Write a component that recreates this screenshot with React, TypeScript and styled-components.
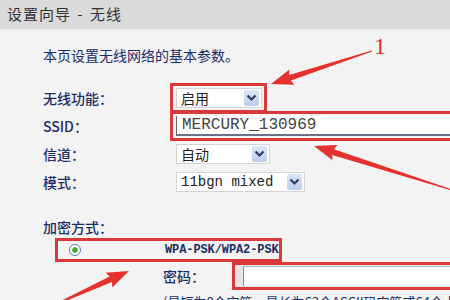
import React from 'react';
import styled, { createGlobalStyle } from 'styled-components';

const GlobalStyle = createGlobalStyle`
  html, body {
    margin: 0;
    padding: 0;
    background: #f3f3f3;
  }
`;

const CJK = `"Noto Sans CJK SC", "Noto Sans", sans-serif`;
const MONO = `"Liberation Mono", "DejaVu Sans Mono", monospace`;
const RED = '#d8393a';

type Arrow = { from: [number, number]; to: [number, number] };

// tapered annotation arrow, thin at the tail, wide head at the tip
function arrowPoints({ from, to }: Arrow) {
  const [x1, y1] = from;
  const [x2, y2] = to;
  const dx = x2 - x1;
  const dy = y2 - y1;
  const len = Math.hypot(dx, dy);
  const ux = dx / len;
  const uy = dy / len;
  const nx = -uy;
  const ny = ux;
  const headLen = 20;
  const headW = 8;
  const shaftW = 3;
  const bx = x2 - ux * headLen;
  const by = y2 - uy * headLen;
  const pts = [
    [x1 + nx * 0.6, y1 + ny * 0.6],
    [bx + nx * shaftW, by + ny * shaftW],
    [bx + nx * headW - ux * 2, by + ny * headW - uy * 2],
    [x2, y2],
    [bx - nx * headW - ux * 2, by - ny * headW - uy * 2],
    [bx - nx * shaftW, by - ny * shaftW],
    [x1 - nx * 0.6, y1 - ny * 0.6],
  ];
  return pts.map(p => `${p[0].toFixed(1)},${p[1].toFixed(1)}`).join(' ');
}

const arrows: Arrow[] = [
  { from: [372, 51], to: [271, 84] },
  { from: [452, 190], to: [314, 146] },
  { from: [52, 306], to: [129, 271] },
];

const App: React.FC = () => {
  return (
    <Page>
      <GlobalStyle />
      <Header>设置向导 - 无线</Header>
      <Body>
        <Intro>本页设置无线网络的基本参数。</Intro>
        <FormGrid>
          <Label>无线功能：</Label>
          <Highlight>
            <Select $width={86}>
              <SelectText>启用</SelectText>
              <DropButton />
            </Select>
          </Highlight>

          <Label>SSID：</Label>
          <Highlight $stretch>
            <TextInput>MERCURY_130969</TextInput>
          </Highlight>

          <Label>信道：</Label>
          <Plain>
            <Select $width={94}>
              <SelectText>自动</SelectText>
              <DropButton />
            </Select>
          </Plain>

          <Label>模式：</Label>
          <Plain>
            <Select $width={129}>
              <SelectText $mono>11bgn mixed</SelectText>
              <DropButton />
            </Select>
          </Plain>
        </FormGrid>

        <SectionLabel>加密方式：</SectionLabel>
        <RadioBox>
          <Radio />
          <RadioText>WPA-PSK/WPA2-PSK</RadioText>
        </RadioBox>
        <PasswordRow>
          <Label>密码：</Label>
          <PasswordBox>
            <PasswordInput />
          </PasswordBox>
        </PasswordRow>
        <Hint>(最短为8个字符，最长为63个ASCII码字符或64个十六进制字符)</Hint>
      </Body>

      <Annotations width={450} height={300} viewBox="0 0 450 300">
        {arrows.map((a, i) => (
          <polygon key={i} points={arrowPoints(a)} fill="#e5322d" />
        ))}
        <text x="374" y="54" fill="#e0302c" fontFamily="Liberation Serif, serif" fontSize="24">1</text>
      </Annotations>
    </Page>
  );
};

const DropButton: React.FC = () => (
  <Chevron>
    <svg width="11" height="8" viewBox="0 0 11 8">
      <polyline points="1.5,1.5 5.5,5.5 9.5,1.5" fill="none" stroke="#2b3d6e" strokeWidth="2.2" />
    </svg>
  </Chevron>
);

const Page = styled.div`
  position: relative;
  width: 450px;
  height: 300px;
  overflow: hidden;
  background: #f3f3f3;
`;

const Header = styled.div`
  height: 30px;
  background: #dadada;
  border-bottom: 1px solid #e6e6e6;
  box-sizing: border-box;
  padding-left: 7px;
  font-family: ${CJK};
  font-size: 15px;
  letter-spacing: 1px;
  word-spacing: 2px;
  line-height: 28px;
  color: #333;
`;

const Body = styled.div`
  padding-left: 43px;
  display: flex;
  flex-direction: column;
  align-items: flex-start;
`;

const Intro = styled.div`
  margin-top: 17px;
  font-family: ${CJK};
  font-size: 14px;
  line-height: 16px;
  color: #1c2b6b;
`;

const FormGrid = styled.div`
  margin-top: 21px;
  display: grid;
  grid-template-columns: 127px 280px;
  grid-auto-rows: 28px;
  align-items: center;
`;

const Label = styled.div`
  font-family: ${CJK};
  font-size: 14px;
  font-weight: 500;
  color: #1e2c66;
  white-space: nowrap;
`;

const Highlight = styled.div<{ $stretch?: boolean }>`
  display: flex;
  border: 3px solid ${RED};
  padding: 2px 2px 2px 3px;
  width: ${({ $stretch }) => ($stretch ? '300px' : 'auto')};
  justify-self: start;
`;

const Plain = styled.div`
  padding-left: 6px;
  display: flex;
`;

const Select = styled.div<{ $width: number }>`
  width: ${({ $width }) => $width}px;
  height: 20px;
  box-sizing: border-box;
  background: #fff;
  border: 1px solid #d4d4d4;
  display: flex;
  align-items: center;
  justify-content: space-between;
  padding: 0 2px 0 4px;
`;

const SelectText = styled.span<{ $mono?: boolean }>`
  font-family: ${({ $mono }) => ($mono ? MONO : CJK)};
  font-size: 14px;
  color: #222;
`;

const Chevron = styled.span`
  width: 15px;
  height: 16px;
  background: linear-gradient(#dbe6f7, #bccdeb);
  border-radius: 2px;
  display: flex;
  align-items: center;
  justify-content: center;
`;

const TextInput = styled.div`
  flex: 1;
  height: 20px;
  box-sizing: border-box;
  background: #fff;
  border-left: 1px solid #666;
  border-bottom: 2px solid #6a7189;
  padding-left: 5px;
  font-family: ${MONO};
  font-size: 16px;
  line-height: 19px;
  color: #444;
`;

const SectionLabel = styled(Label)`
  margin-top: 23px;
  line-height: 16px;
`;

const RadioBox = styled.div`
  margin-top: 3px;
  margin-left: 12px;
  width: 227px;
  height: 24px;
  box-sizing: border-box;
  border: 3px solid ${RED};
  display: flex;
  align-items: center;
  padding-left: 11px;
`;

const Radio = styled.span`
  width: 10px;
  height: 10px;
  border-radius: 50%;
  border: 1px solid #5d7aa8;
  background: radial-gradient(circle, #3fae3a 0 2.5px, #fff 3px);
`;

const RadioText = styled.span`
  margin-left: 84px;
  font-family: ${MONO};
  font-size: 12px;
  font-weight: 700;
  color: #1e2c66;
  letter-spacing: -0.1px;
`;

const PasswordRow = styled.div`
  margin-left: 120px;
  display: grid;
  grid-template-columns: 69px 240px;
  align-items: center;
`;

const PasswordBox = styled.div`
  height: 28px;
  box-sizing: border-box;
  border: 3px solid ${RED};
  display: flex;
  padding: 1px 0 1px 8px;
  background: #e6e6e6;
`;

const PasswordInput = styled.div`
  flex: 1;
  background: #fff;
  border-left: 1px solid #8a8a8a;
  border-top: 1px solid #bbb;
`;

const Hint = styled.div`
  margin-left: 120px;
  margin-top: 2px;
  font-family: ${CJK};
  font-size: 13px;
  color: #1e2c66;
  white-space: nowrap;
`;

const Annotations = styled.svg`
  position: absolute;
  left: 0;
  top: 0;
  pointer-events: none;
`;

export default App;
